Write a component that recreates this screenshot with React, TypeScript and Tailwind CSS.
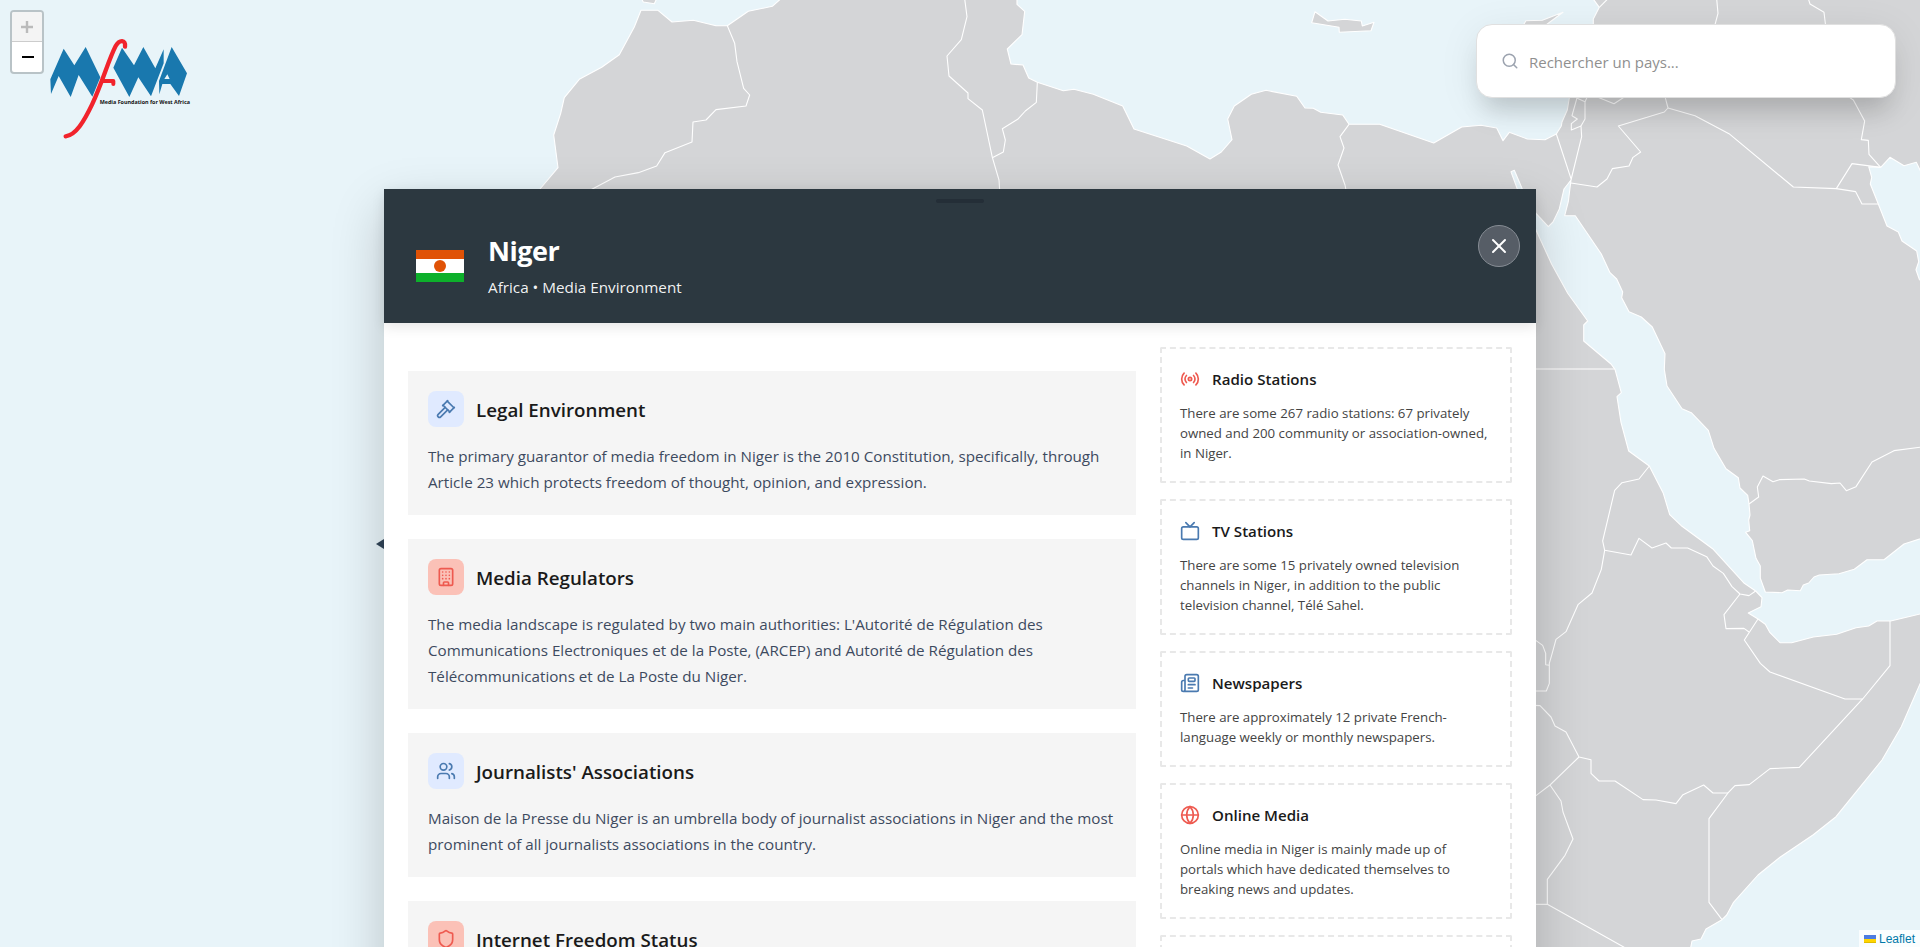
import React from "react";
import { Gavel, Building, Users, Shield, Radio, Tv, Newspaper, Globe, Search, X } from "lucide-react";

const LAND =
  "540,189 558,167.7 553.7,135 560.7,113.3 564.3,97.7 579.3,79.3 601.7,67.3 619.3,54.7 634.3,27 641,10.3 658,10.3 672,22 693.3,20.3 716,25.7 727.3,25.7 748.3,11.3 772.3,6.3 784,-4 1017,-4 1017,4.3 1024.7,11.3 1022,34.7 1007.3,49 1011,64 1023,65 1028.7,78 1037.3,82.3 1063.3,90.7 1074,89.3 1093.3,94.3 1122.7,106 1134,129 1186.7,146 1210,159 1221.3,152 1232,139.7 1227.7,119 1234.3,106 1251.3,94.3 1266,90.3 1296.7,96.3 1305,108 1313.3,108.3 1320.7,112.3 1342.7,115 1349,124.3 1379.7,124.3 1433.7,143 1461.7,127 1481,125.3 1496.7,128 1503,140.7 1509.3,132.3 1527.3,139 1545,139.7 1556.3,134 1561.3,126 1562,122 1567.3,110 1569.3,98 1580,60 1593.3,24 1593.3,19 1599.3,7.3 1591,-4 1924,-4 1924,178 1920,170 1916.3,162.3 1904,165.7 1890,157.3 1880.7,167.3 1868.7,166.7 1871.7,177.3 1870.3,184 1878,203.3 1887,226 1898.3,232 1902,241 1916.7,251 1918.7,261.7 1916,269.7 1919.3,279.3 1924,284 1924,537.5 1904,544 1884,559.7 1867,559.7 1854.3,569.3 1839,573.7 1819.3,575 1814,577 1808.7,583 1803.3,585 1800.3,590.7 1787.7,590 1782,592.7 1765.3,592 1760.3,578.3 1760.3,566 1756,558.3 1752.3,540.7 1745.7,532.3 1749.7,530.7 1748.7,520 1750,515 1749,504 1747.7,495.3 1740,488 1738.3,477.7 1726,468.7 1714,448.3 1708.3,430.3 1691.3,412.7 1682,408.7 1667,386 1664.3,369.3 1665,353.7 1652.3,327 1641.3,317 1629,311.7 1621.7,297.7 1622.7,292 1616.7,279 1610,272.7 1601.3,254 1575.3,215.7 1564.7,215.7 1568.3,201.7 1571,180 1564,189 1559.3,209 1553,222 1548.3,226.7 1536,213.3 1522.3,189 1514.3,170.3 1511,171.7 1517.3,189 1536,230 1551.7,264.3 1567.7,293.3 1587.7,321 1583.7,325 1583.7,341 1611,364 1615,369.3 1621.3,392.7 1617,396.7 1621,422.3 1628.7,451 1649.3,466 1663.3,493.3 1669.7,514.7 1682,526.3 1713.3,549.3 1744.3,583.3 1755.7,591 1762,597.7 1761,606.7 1748.3,613 1758,619 1765.3,624.3 1770,632.7 1780,642.7 1791.7,642.7 1813.3,637 1836.7,634.3 1856,627.7 1868.7,626 1877,621 1890.7,621 1924,613 1924,675 1920,684 1901.3,726.7 1882,760 1836,816.7 1813.3,834.7 1780,857.3 1758,875 1733.3,902.7 1726.7,915 1722,919.7 1706,929 1701,939 1692,941 1690,951 1000,951 500,600";

const ISLANDS = [
  "1524,24 1526,20.7 1542.3,20.3 1563,12.3 1547.3,24 1536,30",
  "1315,11.7 1328,21 1344.7,19.3 1361.3,21 1362.3,26 1374,22.3 1371,30.7 1339.3,32.3 1339,27.3 1311.7,22.7",
  "640,-4 643.3,2 654.3,3.7 658,-4",
];

const BORDERS: { at: string; lines: string[] }[] = [
  {
    at: "translate(520 0) scale(0.33333)",
    lines: [
      "622,77 644,130 651,185 671,265 689,285 678,318 588,329 558,360 519,366 516,426 435,458 410,498 355,518 285,531 210,571",
      "1334,-4 1341,50 1324,119 1281,168 1287,228 1344,279 1344,296 1387,330 1417,472 1437,540 1439,570",
    ],
  },
  {
    at: "translate(960 0) scale(0.33333)",
    lines: [
      "232,247 229,307 196,333 173,358 127,386 136,420 130,456 97,473",
      "1167,373 1140,410 1152,444 1134,495 1155,555 1158,570",
    ],
  },
  {
    at: "translate(1400 0) scale(0.33333)",
    lines: [
      "598,22 624,-4",
      "950,-4 954,40 944,78",
      "1225,-4 1230,12 1272,37 1277,78",
      "469,402 513,536",
      "513,540 545,410 543,378 514,390 514,371 532,357 516,347 532,290",
      "543,378 555,357 555,305 530,294",
      "555,305 562,290",
      "590,290 642,311 672,292",
      "795,290 804,324 793,336 655,378 722,456 699,472 687,498 637,506 621,537 591,561 513,549",
      "804,324 885,347 987,401 1180,561 1309,566 1356,491 1442,502",
      "1309,566 1367,575 1386,612 1434,612",
      "1345,290 1360,300 1394,363 1384,419 1405,421 1407,463 1442,502",
    ],
  },
  {
    at: "translate(1520 300) scale(0.33333)",
    lines: [
      "40,207 285,207",
      "388,498 357,537 306,548 284,571 248,723 254,751 244,808 216,879 174,914 138,995 108,1018 98,1055 88,1090 88,1150 79,1173 40,1173",
      "254,751 333,765 357,715 396,744 438,729 454,744 503,744 560,770 579,798 610,820 636,860 660,882 687,887 707,873",
      "660,882 612,944 618,986 672,985 687,996",
      "714,957 673,1020 721,1090 750,1116 975,1197 1028,1197",
      "687,612 716,591 712,561 729,528 759,545 778,539 853,537 868,543 934,551 960,549 979,572 1008,560 1056,486 1122,452 1212,440",
      "1110,963 1110,1097 1028,1197 838,1402 750,1406 688,1454 645,1457 624,1479 567,1556 567,1807 606,1859",
    ],
  },
  {
    at: "translate(1520 630) scale(0.33333)",
    lines: [
      "40,26 68,46 77,70 77,104 88,106",
      "40,226 60,227 93,261 105,288 138,306 177,381 213,389 213,430 237,453 285,453 369,509 408,510 468,521 489,494 551,465 579,489 624,489",
      "177,381 90,465 40,503",
      "90,465 123,513 129,546 159,627 135,676 82,748 82,823 320,956",
      "40,823 82,823",
    ],
  },
];

function WorldMap() {
  return (
    <svg className="absolute inset-0 h-full w-full" viewBox="0 0 1920 947" fill="#d4d5d7" stroke="#ffffff" strokeWidth="1.1" strokeLinejoin="round">
      <polygon points={LAND} />
      {ISLANDS.map((points) => (
        <polygon key={points} points={points} />
      ))}
      {BORDERS.map((group) => (
        <g key={group.at} transform={group.at} fill="none" strokeWidth="3.3">
          {group.lines.map((points) => (
            <polyline key={points} points={points} />
          ))}
        </g>
      ))}
    </svg>
  );
}

function Logo() {
  return (
    <svg className="absolute left-[50px] top-[38px] h-[102px] w-[146px]" viewBox="150 114 438 306">
      <g fill="#1978ae">
        <path d="M151 238 191 146 223 196 257 141 301 232 277 290 236 225 212 291 176 228 153 282Z" />
        <path d="M340 203 366 143 402 196 430 141 466 205 491 148V190L453 289 415 232 388 291Z" />
        <path fillRule="evenodd" d="M515 141 561 220 537 288 511 252 487 252 478 283 477 243ZM502 223 493 237H509Z" />
      </g>
      <path d="M375 140C378 118 358 118 347 138C326 178 307 248 276 314C252 364 228 405 197 409" fill="none" stroke="#f1232c" strokeWidth="13" strokeLinecap="round" />
      <path d="M306 243H340V252" fill="none" stroke="#f1232c" strokeWidth="12" strokeLinejoin="round" strokeLinecap="round" />
      <text x="299" y="311" textLength="271" lengthAdjust="spacingAndGlyphs" fill="#111" className="font-['Open_Sans',sans-serif] text-[17px] font-bold">
        Media Foundation for West Africa
      </text>
    </svg>
  );
}

const sections = [
  {
    title: "Legal Environment",
    icon: Gavel,
    tone: "bg-[#e0eaff] text-[#4a7ab0]",
    text: "The primary guarantor of media freedom in Niger is the 2010 Constitution, specifically, through Article 23 which protects freedom of thought, opinion, and expression.",
  },
  {
    title: "Media Regulators",
    icon: Building,
    tone: "bg-[#fbc1b7] text-[#ee5a50]",
    text: "The media landscape is regulated by two main authorities: L'Autorité de Régulation des Communications Electroniques et de la Poste, (ARCEP) and Autorité de Régulation des Télécommunications et de La Poste du Niger.",
  },
  {
    title: "Journalists' Associations",
    icon: Users,
    tone: "bg-[#e0eaff] text-[#4a7ab0]",
    text: "Maison de la Presse du Niger is an umbrella body of journalist associations in Niger and the most prominent of all journalists associations in the country.",
  },
  { title: "Internet Freedom Status", icon: Shield, tone: "bg-[#fbc1b7] text-[#ee5a50]", text: "" },
];

const outlets = [
  {
    title: "Radio Stations",
    icon: Radio,
    tone: "text-[#ee5a50]",
    text: "There are some 267 radio stations: 67 privately owned and 200 community or association-owned, in Niger.",
  },
  {
    title: "TV Stations",
    icon: Tv,
    tone: "text-[#4a7ab0]",
    text: "There are some 15 privately owned television channels in Niger, in addition to the public television channel, Télé Sahel.",
  },
  {
    title: "Newspapers",
    icon: Newspaper,
    tone: "text-[#4a7ab0]",
    text: "There are approximately 12 private French-language weekly or monthly newspapers.",
  },
  {
    title: "Online Media",
    icon: Globe,
    tone: "text-[#ee5a50]",
    text: "Online media in Niger is mainly made up of portals which have dedicated themselves to breaking news and updates.",
  },
];

export default function App() {
  return (
    <div className="relative flex h-[947px] w-full justify-center overflow-hidden bg-[#e8f4f9] font-['Open_Sans','Noto_Sans',sans-serif]">
      <WorldMap />

      <div className="absolute left-[10px] top-[10px] flex w-[34px] flex-col rounded-[4px] border-2 border-[#b9c3c7] bg-white">
        <div className="flex h-[30px] items-center justify-center rounded-t-[2px] border-b border-[#ccc] bg-[#f4f4f4] text-[#bbb]">
          <svg width="14" height="14" viewBox="0 0 14 14" stroke="currentColor" strokeWidth="2.4"><path d="M1 7H13M7 1V13" /></svg>
        </div>
        <div className="flex h-[30px] items-center justify-center pl-px text-black">
          <svg width="14" height="14" viewBox="0 0 14 14" stroke="currentColor" strokeWidth="2"><path d="M1 7H13" /></svg>
        </div>
      </div>

      <Logo />

      <div className="absolute right-6 top-6 flex h-[74px] w-[420px] items-center rounded-[16px] border border-[#e0e0e0] bg-white pl-6 shadow-[0_20px_25px_-8px_rgba(0,0,0,0.15),0_8px_40px_rgba(0,0,0,0.08)]">
        <Search className="size-[18px] text-[#9ca3af]" strokeWidth={2} />
        <span className="ml-[10px] pt-0.5 text-[15px] text-[#8f8f8f]">Rechercher un pays...</span>
      </div>

      <div className="absolute bottom-0 right-0 flex h-[17px] items-center bg-white/80 pl-[5px] pr-[5px] font-['Liberation_Sans',Arial,sans-serif] text-[12px] text-[#0078a8]">
        <svg className="mr-[3px] h-2 w-3" viewBox="0 0 12 8">
          <path fill="#4c7be1" d="M0 0h12v4H0z" />
          <path fill="#ffd500" d="M0 4h12v3H0z" />
          <path fill="#e0bc00" d="M0 7h12v1H0z" />
        </svg>
        Leaflet
      </div>

      <main className="relative mt-[189px] flex h-[900px] w-[1152px] flex-col bg-white shadow-[0_20px_50px_rgba(0,0,0,0.2)]">
        <svg className="absolute -left-2 top-[350px] h-[10px] w-2" viewBox="0 0 8 10">
          <path d="M8 0V10L0 5Z" fill="#2c3e50" />
        </svg>
        <header className="relative z-10 flex h-[134px] shrink-0 flex-col bg-[#2c3840] text-white shadow-[0_4px_12px_rgba(0,0,0,0.1)]">
          <div className="flex h-[19px] items-center justify-center pt-[5px]">
            <div className="h-1 w-12 rounded-full bg-[#242e37]" />
          </div>
          <div className="flex flex-1 items-start justify-between pl-8 pr-4">
            <div className="flex items-start">
              <svg className="mt-[42px] h-8 w-12" viewBox="0 0 48 32">
                <path fill="#fff" d="M0 0h48v32H0z" />
                <path fill="#e05206" d="M0 0h48v9H0z" />
                <path fill="#0db02b" d="M0 23h48v9H0z" />
                <circle cx="24" cy="16" r="6" fill="#e05206" />
              </svg>
              <div className="ml-6 mt-[25px]">
                <h1 className="text-[27px] font-bold leading-9 tracking-[-0.5px]">Niger</h1>
                <p className="mt-1.5 text-[15.25px] leading-6 text-white/95">Africa • Media Environment</p>
              </div>
            </div>
            <button className="mt-[17px] flex size-[42px] items-center justify-center rounded-full border border-[#878d95] bg-[#565d66]">
              <X className="size-6" strokeWidth={2} />
            </button>
          </div>
        </header>

        <div className="flex gap-6 px-6 pt-6">
          <div className="flex w-[728px] flex-col gap-6 pt-6">
            {sections.map(({ title, icon: Icon, tone, text }) => (
              <section key={title} className="bg-[#f5f5f5] p-5">
                <div className="mb-4 flex h-9 items-center gap-3">
                  <div className={`flex size-9 items-center justify-center rounded-lg ${tone}`}>
                    <Icon className="size-5" strokeWidth={2} />
                  </div>
                  <h2 className="pt-0.5 text-[18.75px] font-semibold text-[#1a1a1a]">{title}</h2>
                </div>
                <p className="text-[15.19px] leading-[26px] text-[#3d4a5f]">{text}</p>
              </section>
            ))}
          </div>

          <aside className="flex w-[352px] flex-col gap-4">
            {outlets.map(({ title, icon: Icon, tone, text }) => (
              <section key={title} className="rounded-[2px] border-2 border-dashed border-[#e8e8e8] p-[18px]">
                <div className="mb-3 flex h-6 items-center gap-3">
                  <Icon className={`size-5 ${tone}`} strokeWidth={2} />
                  <h3 className="text-[15.1px] font-semibold text-[#1a1a1a]">{title}</h3>
                </div>
                <p className="text-[13.25px] leading-5 text-[#444]">{text}</p>
              </section>
            ))}
            <section className="h-[136px] rounded-[2px] border-2 border-dashed border-[#e8e8e8]" />
          </aside>
        </div>
      </main>
    </div>
  );
}
